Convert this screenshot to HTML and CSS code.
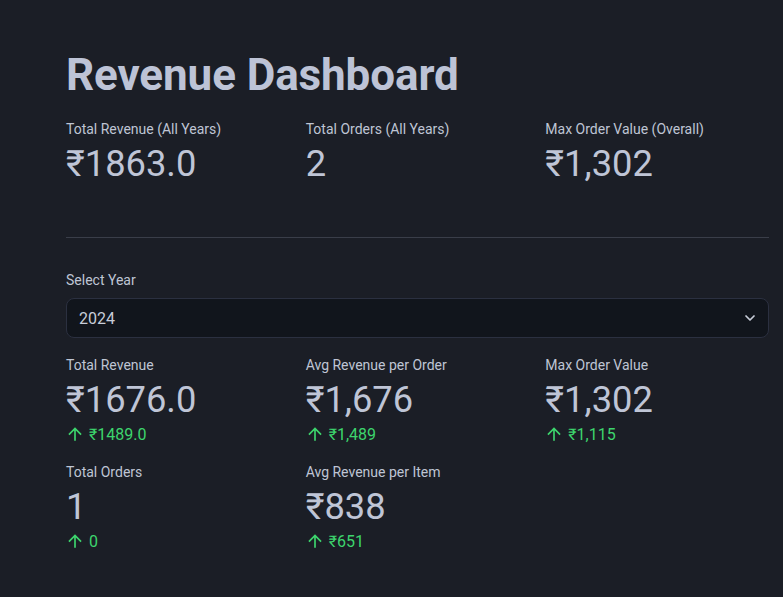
FILE: index.html
```html
<!DOCTYPE html>
<html>
<head>
<meta charset="utf-8">
<link rel="stylesheet" href="styles.css">
</head>
<body>
<main class="page">
  <h1 class="title">Revenue Dashboard</h1>
  <div class="grid">
    <div class="metric">
      <div class="label">Total Revenue (All Years)</div>
      <div class="value">₹1863.0</div>
    </div>
    <div class="metric">
      <div class="label">Total Orders (All Years)</div>
      <div class="value">2</div>
    </div>
    <div class="metric">
      <div class="label">Max Order Value (Overall)</div>
      <div class="value">₹1,302</div>
    </div>
  </div>
  <hr class="divider">
  <div class="field">
    <div class="field-label">Select Year</div>
    <div class="select">
      <span>2024</span>
      <svg class="chev" viewBox="0 0 24 24" width="16" height="16"><path d="M6 9l6 6 6-6" fill="none" stroke="currentColor" stroke-width="2.6" stroke-linecap="round" stroke-linejoin="round"/></svg>
    </div>
  </div>
  <div class="grid rows">
    <div class="metric">
      <div class="label">Total Revenue</div>
      <div class="value">₹1676.0</div>
      <div class="delta"><svg viewBox="0 0 24 24" width="20" height="20"><path d="M4 12l1.41 1.41L11 7.83V20h2V7.83l5.58 5.59L20 12l-8-8-8 8z" fill="currentColor"/></svg><span>₹1489.0</span></div>
    </div>
    <div class="metric">
      <div class="label">Avg Revenue per Order</div>
      <div class="value">₹1,676</div>
      <div class="delta"><svg viewBox="0 0 24 24" width="20" height="20"><path d="M4 12l1.41 1.41L11 7.83V20h2V7.83l5.58 5.59L20 12l-8-8-8 8z" fill="currentColor"/></svg><span>₹1,489</span></div>
    </div>
    <div class="metric">
      <div class="label">Max Order Value</div>
      <div class="value">₹1,302</div>
      <div class="delta"><svg viewBox="0 0 24 24" width="20" height="20"><path d="M4 12l1.41 1.41L11 7.83V20h2V7.83l5.58 5.59L20 12l-8-8-8 8z" fill="currentColor"/></svg><span>₹1,115</span></div>
    </div>
    <div class="metric">
      <div class="label">Total Orders</div>
      <div class="value">1</div>
      <div class="delta"><svg viewBox="0 0 24 24" width="20" height="20"><path d="M4 12l1.41 1.41L11 7.83V20h2V7.83l5.58 5.59L20 12l-8-8-8 8z" fill="currentColor"/></svg><span>0</span></div>
    </div>
    <div class="metric">
      <div class="label">Avg Revenue per Item</div>
      <div class="value">₹838</div>
      <div class="delta"><svg viewBox="0 0 24 24" width="20" height="20"><path d="M4 12l1.41 1.41L11 7.83V20h2V7.83l5.58 5.59L20 12l-8-8-8 8z" fill="currentColor"/></svg><span>₹651</span></div>
    </div>
  </div>
</main>
</body>
</html>
```

FILE: styles.css
```css
html, body {
  margin: 0;
  padding: 0;
  background: #1b1e26;
  color: #bfc5d4;
  font-family: Roboto, "Noto Sans", sans-serif;
}

.page {
  padding: 47px 14px 40px 66px;
  overflow: hidden;
}

.title {
  margin: 0 0 14px 0;
  font-size: 44px;
  font-weight: 700;
  line-height: 56px;
  color: #bdc3d6;
  letter-spacing: -0.1px;
}

.grid {
  display: grid;
  grid-template-columns: repeat(3, 1fr);
  column-gap: 16px;
  row-gap: 15px;
}

.metric {
  display: flex;
  flex-direction: column;
}

.label {
  font-size: 14px;
  line-height: 24px;
  color: #bfc5d4;
}

.value {
  font-size: 36.3px;
  line-height: 46px;
  color: #bfc5d6;
}

.delta {
  display: flex;
  align-items: center;
  gap: 4px;
  height: 22px;
  font-size: 16px;
  color: #3dd56d;
}

.delta svg {
  flex: none;
  margin-left: -1px;
}

.divider {
  margin: 50px 0 32px 0;
  border: none;
  height: 1px;
  background: #3a3e49;
}

.field {
  display: flex;
  flex-direction: column;
  margin-bottom: 15px;
}

.field-label {
  font-size: 14px;
  line-height: 20px;
  margin-bottom: 8px;
  color: #bfc5d4;
}

.select {
  display: flex;
  align-items: center;
  justify-content: space-between;
  height: 38px;
  padding: 0 12px;
  background: #11151c;
  border: 1px solid #2b3040;
  border-radius: 8px;
  font-size: 16px;
  color: #c8cdd9;
}

.chev {
  color: #c8cdd9;
  margin-right: -2px;
}
```
